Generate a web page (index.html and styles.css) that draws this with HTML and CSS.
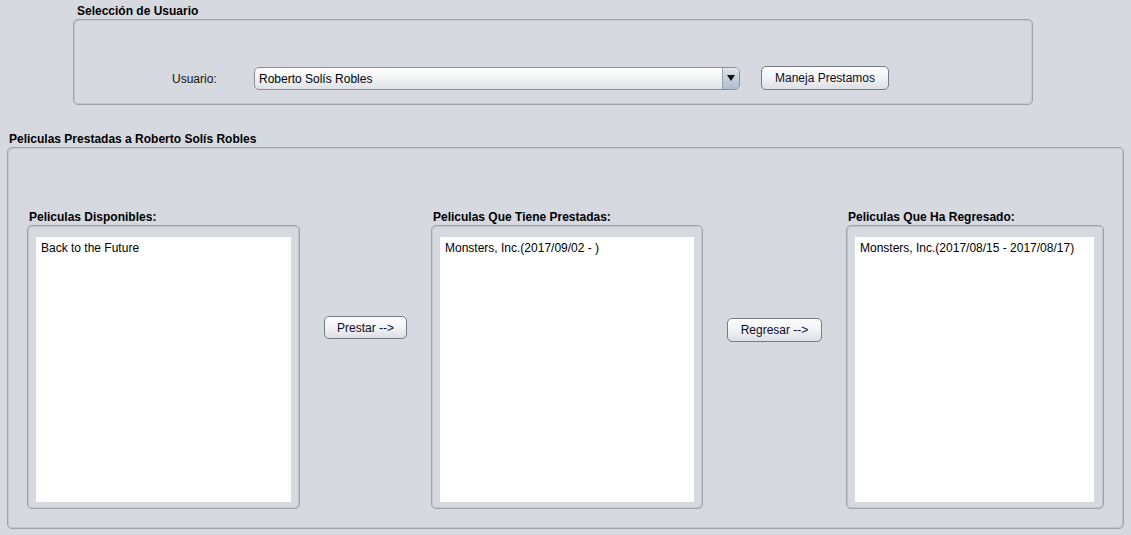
FILE: index.html
```html
<!DOCTYPE html>
<html lang="es">
<head>
<meta charset="utf-8">
<title>Prestamos</title>
<link rel="stylesheet" href="styles.css">
</head>
<body>
  <section class="user-section">
    <div class="group-title user-title">Selección de Usuario</div>
    <div class="group-box user-box">
      <div class="user-row">
        <span class="user-label">Usuario:</span>
        <div class="combo">
          <span class="combo-text">Roberto Solís Robles</span>
          <span class="combo-arrow"><span class="tri"></span></span>
        </div>
        <button class="btn btn-maneja">Maneja Prestamos</button>
      </div>
    </div>
  </section>

  <section class="loan-section">
    <div class="group-title loan-title">Peliculas Prestadas a Roberto Solís Robles</div>
    <div class="group-box loan-box">
      <div class="loan-grid">
        <div class="col">
          <div class="sub-title">Peliculas Disponibles:</div>
          <div class="sub-box">
            <ul class="list"><li>Back to the Future</li></ul>
          </div>
        </div>
        <div class="mid mid-1">
          <button class="btn btn-prestar">Prestar --&gt;</button>
        </div>
        <div class="col">
          <div class="sub-title">Peliculas Que Tiene Prestadas:</div>
          <div class="sub-box">
            <ul class="list"><li>Monsters, Inc.(2017/09/02 - )</li></ul>
          </div>
        </div>
        <div class="mid mid-2">
          <button class="btn btn-regresar">Regresar --&gt;</button>
        </div>
        <div class="col col-3">
          <div class="sub-title">Peliculas Que Ha Regresado:</div>
          <div class="sub-box sub-box-3">
            <ul class="list"><li>Monsters, Inc.(2017/08/15 - 2017/08/17)</li></ul>
          </div>
        </div>
      </div>
    </div>
  </section>
</body>
</html>
```

FILE: styles.css
```css
* { box-sizing: border-box; }

html, body {
  margin: 0;
  padding: 0;
  background: #d6d9df;
  width: 1131px;
  height: 535px;
  overflow: hidden;
  font-family: "Liberation Sans", Arial, sans-serif;
  font-size: 12px;
  color: #000;
}

.group-title {
  font-weight: bold;
  line-height: 15px;
  height: 15px;
  color: #000;
  white-space: nowrap;
}

.group-box {
  border: 1px solid #9fa2a9;
  border-radius: 5px;
  box-shadow: inset 1px 1px 0 #c3c6cc, inset -1px -1px 0 #c3c6cc;
}

/* top section */
.user-section {
  padding-top: 4px;
  padding-left: 73px;
}
.user-title { padding-left: 4px; }
.user-box {
  width: 960px;
  height: 86px;
  padding: 46px 0 0 98px;
}
.user-row {
  display: flex;
  align-items: center;
  height: 24px;
}
.user-label {
  width: 82px;
  color: #111;
  padding-top: 1px;
}
.combo {
  width: 486px;
  height: 23px;
  display: flex;
  align-items: stretch;
  border: 1px solid #8a9099;
  border-radius: 5px;
  background: linear-gradient(#fdfdfe, #f1f3f5 50%, #dde1e7);
  overflow: hidden;
}
.combo-text {
  flex: 1;
  padding-left: 4px;
  line-height: 22px;
}
.combo-arrow {
  width: 17px;
  border-left: 1px solid #98a3b1;
  background: linear-gradient(#dfe6ee, #c3cedb 55%, #aebccd);
  display: flex;
  align-items: center;
  justify-content: center;
}
.tri {
  width: 0;
  height: 0;
  border-left: 4px solid transparent;
  border-right: 4px solid transparent;
  border-top: 6px solid #111;
}

.btn {
  font-family: "Liberation Sans", Arial, sans-serif;
  font-size: 12px;
  color: #0d0d26;
  border: 1px solid #767b85;
  border-radius: 5px;
  background: linear-gradient(#fdfdfe, #f3f4f6 45%, #dcdfe5);
  padding: 1px 0 0 0;
  height: 24px;
  line-height: 21px;
  text-align: center;
}
.btn-maneja {
  width: 128px;
  margin-left: 21px;
}

/* bottom section */
.loan-section {
  margin-top: 27px;
}
.loan-title { padding-left: 9px; }
.loan-box {
  margin-left: 7px;
  width: 1117px;
  height: 382px;
  padding: 62px 0 0 19px;
}
.loan-grid {
  display: grid;
  grid-template-columns: 273px 131px 272px 143px 258px;
}
.sub-title {
  font-weight: bold;
  line-height: 15px;
  height: 15px;
  padding-left: 2px;
  white-space: nowrap;
}
.sub-box {
  height: 284px;
  border: 1px solid #9fa2a9;
  border-radius: 5px;
  box-shadow: inset 1px 1px 0 #c3c6cc, inset -1px -1px 0 #c3c6cc;
  padding: 11px 8px 6px 8px;
}
.sub-box-3 { padding-right: 9px; }
.list {
  list-style: none;
  margin: 0;
  padding: 4px 0 0 5px;
  background: #fff;
  height: 100%;
}
.list li {
  line-height: 15px;
  white-space: nowrap;
  color: #000;
}

.mid {
  display: flex;
  flex-direction: column;
  align-items: center;
}
.mid-1 { padding-top: 106px; }
.mid-2 { padding-top: 108px; }
.btn-prestar { width: 83px; height: 23px; line-height: 20px; }
.btn-regresar { width: 95px; }
```
